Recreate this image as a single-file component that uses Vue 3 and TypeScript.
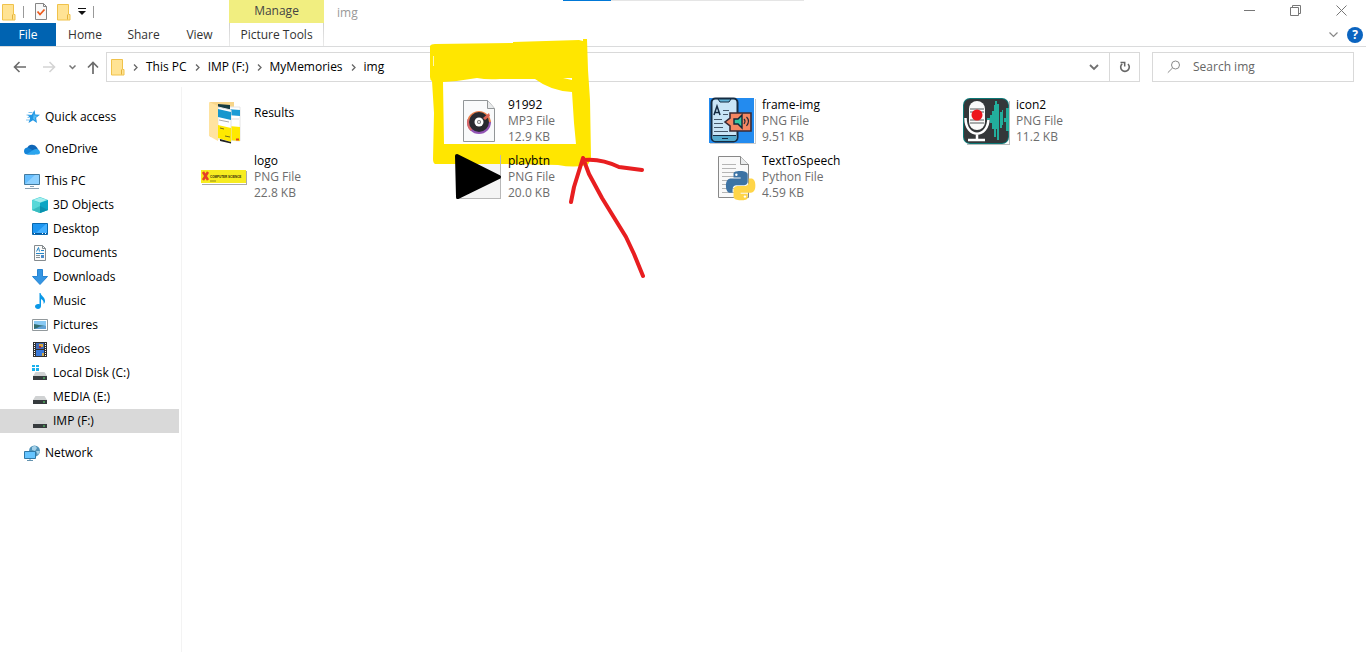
<script setup lang="ts">
import { ref } from 'vue'

interface Place {
  label: string
  icon: string
  nested?: boolean
}

interface Entry {
  name: string
  icon: string
  kind?: string
  size?: string
}

const groups: Place[][] = [
  [{ label: 'Quick access', icon: 'star' }],
  [{ label: 'OneDrive', icon: 'cloud' }],
  [
    { label: 'This PC', icon: 'pc' },
    { label: '3D Objects', icon: 'cube', nested: true },
    { label: 'Desktop', icon: 'desktop', nested: true },
    { label: 'Documents', icon: 'document', nested: true },
    { label: 'Downloads', icon: 'download', nested: true },
    { label: 'Music', icon: 'music', nested: true },
    { label: 'Pictures', icon: 'picture', nested: true },
    { label: 'Videos', icon: 'video', nested: true },
    { label: 'Local Disk (C:)', icon: 'system-drive', nested: true },
    { label: 'MEDIA (E:)', icon: 'drive', nested: true },
    { label: 'IMP (F:)', icon: 'drive', nested: true },
  ],
  [{ label: 'Network', icon: 'network' }],
]

const entries: Entry[] = [
  { name: 'Results', icon: 'results' },
  { name: '91992', icon: 'mp3', kind: 'MP3 File', size: '12.9 KB' },
  { name: 'frame-img', icon: 'frame', kind: 'PNG File', size: '9.51 KB' },
  { name: 'icon2', icon: 'mic', kind: 'PNG File', size: '11.2 KB' },
  { name: 'logo', icon: 'logo', kind: 'PNG File', size: '22.8 KB' },
  { name: 'playbtn', icon: 'play', kind: 'PNG File', size: '20.0 KB' },
  { name: 'TextToSpeech', icon: 'python', kind: 'Python File', size: '4.59 KB' },
]

const snake =
  'M14.250.180l.9.2.73.26.59.3.45.32.34.34.25.34.16.33.1.3.04.26.02.2-.01.13V8.500l-.05.63-.13.55-.21.46-.26.38-.3.31-.33.25-.35.19-.35.14-.33.1-.3.07-.26.04-.21.02H8.770l-.69.05-.59.14-.5.22-.41.27-.33.32-.27.35-.2.36-.15.37-.1.35-.07.32-.04.27-.02.21v3.060H3.170l-.21-.03-.28-.07-.32-.12-.35-.18-.36-.26-.36-.36-.35-.46-.32-.59-.28-.73-.21-.88-.14-1.050-.05-1.230.06-1.220.16-1.040.24-.87.32-.71.36-.57.4-.44.42-.33.42-.24.4-.16.36-.1.32-.05.24-.01h.16l.06.01h8.160v-.83H6.180l-.01-2.750-.02-.37.05-.34.11-.31.17-.28.25-.26.31-.23.38-.2.44-.18.51-.15.58-.12.64-.1.71-.06.77-.04.84-.02 1.270.05z'

const crumbs = ['This PC', 'IMP (F:)', 'MyMemories', 'img']
const selected = ref('IMP (F:)')
const query = ref('')
</script>

<template>
  <div class="window">
    <header class="titlebar">
      <div class="quickbar">
        <svg class="folder" width="14" height="18" viewBox="0 0 14 18"><path d="M.5 1.500h11v10h1.500v5.500H.5z" fill="#ffe394" stroke="#f0c24b" /><path d="M10.500 11.500v5" stroke="#e3b23c" /></svg>
        <span class="rule"></span>
        <button class="tool check" aria-label="Properties">
          <svg width="12" height="17" viewBox="0 0 12 17"><path d="M.5.5h8l3 3v13H.5z" fill="#f8f8f8" stroke="#858585" /><path d="M8.500.5v3h3" fill="none" stroke="#858585" /><path d="M2.500 8.500l2.500 3 4.500-5" fill="none" stroke="#ed5a1c" stroke-width="1.800" /></svg>
        </button>
        <button class="tool" aria-label="New folder">
          <svg width="14" height="18" viewBox="0 0 14 18"><path d="M.5 1.500h11v10h1.500v5.500H.5z" fill="#ffe394" stroke="#f0c24b" /><path d="M10.500 11.500v5" stroke="#e3b23c" /></svg>
        </button>
        <button class="tool more" aria-label="Customize toolbar">
          <svg width="8" height="7" viewBox="0 0 8 7"><path d="M0 .5h8" stroke="#111" /><path d="M0 3h8L4 7z" fill="#111" /></svg>
        </button>
        <span class="rule"></span>
      </div>
      <div class="manage">Manage</div>
      <h1 class="title">img</h1>
      <div class="controls">
        <button aria-label="Minimize"><svg width="11" height="11"><path d="M0 5.500h11" stroke="#777" /></svg></button>
        <button aria-label="Restore"><svg width="11" height="11" fill="none" stroke="#777"><path d="M.5 2.500h8v8h-8zM2.500 2.500v-2h8v8h-2" /></svg></button>
        <button aria-label="Close"><svg width="11" height="11"><path d="M.5.5l10 10M10.500.5l-10 10" stroke="#777" /></svg></button>
      </div>
    </header>

    <nav class="ribbon" aria-label="Ribbon">
      <div class="tabs">
        <button class="file">File</button>
        <button>Home</button>
        <button>Share</button>
        <button>View</button>
      </div>
      <button class="tools-tab">Picture Tools</button>
      <div class="ribbon-end">
        <button class="expand" aria-label="Expand ribbon"><svg width="9" height="6"><path d="M.5.5l4 4 4-4" fill="none" stroke="#888" stroke-width="1.200" /></svg></button>
        <button class="help" aria-label="Help">?</button>
      </div>
    </nav>

    <div class="navbar">
      <div class="history">
        <button class="back" aria-label="Back"><svg width="13" height="12"><path d="M13 6H1.500M6.500 1l-5 5 5 5" fill="none" stroke="#6b6b6b" stroke-width="1.600" /></svg></button>
        <button class="forward" aria-label="Forward"><svg width="13" height="12"><path d="M0 6h11.500M6.500 1l5 5-5 5" fill="none" stroke="#d4d4d4" stroke-width="1.600" /></svg></button>
        <button class="recent" aria-label="Recent locations"><svg width="7" height="5"><path d="M.5.5l3 3 3-3" fill="none" stroke="#777" stroke-width="1.500" /></svg></button>
        <button class="up" aria-label="Up"><svg width="12" height="13"><path d="M6 13V1.500M1 6.500l5-5 5 5" fill="none" stroke="#6b6b6b" stroke-width="1.700" /></svg></button>
      </div>
      <div class="address">
        <svg class="place" width="14" height="18" viewBox="0 0 14 18"><path d="M.5 1.500h11v10h1.500v5.500H.5z" fill="#ffe394" stroke="#f0c24b" /><path d="M10.500 11.500v5" stroke="#e3b23c" /></svg>
        <template v-for="crumb in crumbs" :key="crumb">
          <svg class="chevron" width="5" height="7"><path d="M1 .5l3 3-3 3" fill="none" stroke="#666" stroke-width="1.300" /></svg>
          <a class="crumb" href="#">{{ crumb }}</a>
        </template>
        <button class="previous" aria-label="Previous locations"><svg width="10" height="7"><path d="M1 1l4 4 4-4" fill="none" stroke="#707070" stroke-width="1.800" /></svg></button>
        <button class="refresh" aria-label="Refresh"><svg width="12" height="12"><path d="M3.200 2.800A4.300 4.300 0 1 0 9 3" fill="none" stroke="#666" stroke-width="1.600" /><path d="M1.500 1.500h4.200v4" fill="none" stroke="#666" stroke-width="1.500" /></svg></button>
      </div>
      <label class="search">
        <svg width="14" height="14"><circle cx="8.500" cy="5" r="4" fill="none" stroke="#8a8a8a" /><path d="M5.500 8L.8 12.700" stroke="#8a8a8a" /></svg>
        <input v-model="query" type="text" placeholder="Search img" aria-label="Search img" />
      </label>
    </div>

    <div class="body">
      <nav class="sidebar" aria-label="Places">
        <ul v-for="(group, index) in groups" :key="index">
          <li v-for="place in group" :key="place.label">
            <a
              href="#"
              :class="{ nested: place.nested, selected: place.label === selected }"
              @click.prevent="selected = place.label"
            >
              <svg width="16" height="16" viewBox="0 0 16 16" aria-hidden="true">
                <g v-if="place.icon === 'star'">
                  <path d="M10.500 1l.8 4.500 4.700.3-3.900 3 .9 5.200-4-2.800L4.500 14l1.600-4.900-2.600-3 4.300-.4z" fill="#2196e3" />
                  <path d="M10 3.500l.5 3 3.200.2-2.700 2 .5 3-2.500-2z" fill="#55bdf5" />
                  <path d="M4.500 3.500h4M2.500 6h3M3.500 8.500h2M2 11h3" stroke="#7fc2ee" />
                </g>
                <g v-else-if="place.icon === 'cloud'">
                  <path d="M3 7.500A5.500 5.500 0 0 1 13 6.500L15 10l-8 1z" fill="#0f66b7" />
                  <path d="M0 10a3.400 3.400 0 0 1 5-3l7 4.500-1 2H3.500A3.500 3.500 0 0 1 0 10z" fill="#1585d8" />
                  <path d="M3 13l7-4.500a4 4 0 0 1 6 2.500 2.500 2.500 0 0 1-2.500 2.500H4z" fill="#2ba5ee" />
                </g>
                <g v-else-if="place.icon === 'pc'">
                  <path d="M.5 1.500h15v10H.5z" fill="#65beff" stroke="#457b9f" />
                  <path d="M1 11L11 2h4v9z" fill="#8ed1ff" />
                  <path d="M6 13.500h4M1 15.500h14" stroke="#8aa0b1" />
                </g>
                <g v-else-if="place.icon === 'cube'">
                  <path d="M0 3l8-3 8 3v10l-8 3-8-3z" fill="#40cdd2" />
                  <path d="M0 3l8 3v10l-8-3z" fill="#58d8d8" />
                  <path d="M8 6l8-3v10l-8 3z" fill="#0aa5c4" />
                  <path d="M1 3l7-2.500L15 3 8 5.500z" fill="#a4eeee" />
                  <path d="M0 13l8-4v7z" fill="#18a0a8" fill-opacity=".5" />
                  <path d="M8 9l8 4-8 3z" fill="#087e99" fill-opacity=".5" />
                </g>
                <g v-else-if="place.icon === 'desktop'">
                  <path d="M.5 2.500h15v11H.5z" fill="#1e96f1" stroke="#0868af" />
                  <path d="M4 12L14 3h1v9z" fill="#43b0ff" />
                  <path d="M1 12.500h14" stroke="#07589b" />
                  <path d="M2 12.500h1M10 12.500h1M13 12.500h1" stroke="#fff" />
                </g>
                <g v-else-if="place.icon === 'document'">
                  <path d="M2.500.5h8l3 3v12h-11z" fill="#fafafa" stroke="#858b8e" />
                  <path d="M10.500.5v3h3" fill="none" stroke="#858b8e" />
                  <path d="M4.500 6.500l2-4 1 4M9 5.500h3M4 8.500h8" fill="none" stroke="#2585c5" />
                  <path d="M4 10.500h4M4 12.500h4" stroke="#859197" />
                  <path d="M9 10h3v3H9z" fill="#4d8cc8" />
                </g>
                <g v-else-if="place.icon === 'download'">
                  <path d="M5.500.5h5v7h5L8 15.500.5 7.500h5z" fill="#3495e3" stroke="#2684d3" />
                </g>
                <g v-else-if="place.icon === 'music'">
                  <path d="M7.500 0h1c.5 3 5 4.500 4.500 8.500-.3 1.500-1 2-1.500 2.500.5-2.500-.5-4-2.500-5v7c0 4-6 3.500-6 .5 0-2.200 2.500-3 4.500-2.300z" fill="#0a98e7" />
                </g>
                <g v-else-if="place.icon === 'picture'">
                  <path d="M.5 2.500h15v11H.5z" fill="#fff" stroke="#92999c" />
                  <path d="M2 4h12v8H2z" fill="#89c9f3" />
                  <path d="M2 7l5 1 7 1v3H2z" fill="#326d70" />
                  <path d="M5 11c3-2 6-2 9-2v3H2z" fill="#62a2d5" />
                </g>
                <g v-else-if="place.icon === 'video'">
                  <path d="M1 1h14v15H1z" fill="#303030" />
                  <path d="M4 2h8v6H4z" fill="#406ab6" />
                  <path d="M4 9h8v6H4z" fill="#3a79d8" />
                  <path d="M7 3h4v3H7z" fill="#d7a63a" />
                  <path d="M7 5h2v2H7z" fill="#ad2d3b" />
                  <path d="M10 12h2v3h-2z" fill="#d5ab49" />
                  <path d="M2.500 2v13M13.500 2v13" stroke="#fff" stroke-dasharray="1 1" />
                </g>
                <g v-else-if="place.icon === 'network'">
                  <circle cx="10.500" cy="6" r="5.500" fill="#4f92b8" />
                  <path d="M8 2l3-1.500L13 3l-2 3-3-1zM12 6h4l-2 4z" fill="#a3d0e8" />
                  <path d="M.5 6.500h11v7H.5z" fill="#65c4ff" stroke="#2f78a7" />
                  <path d="M3 15.500h6M6 14v2" stroke="#6594b0" />
                </g>
                <g v-else>
                  <path v-if="place.icon === 'system-drive'" d="M0 0h3v2H0zM4 0h3v2H4zM0 3h3v3H0zM4 3h3v3H4z" fill="#19b1ed" />
                  <path d="M3.500 7h9l2.500 4H1z" fill="#d0d2d3" />
                  <path d="M1 11h14v4H1z" fill="#363b3e" />
                  <path d="M11 13h2" stroke="#59e36b" />
                </g>
              </svg>
              <span>{{ place.label }}</span>
            </a>
          </li>
        </ul>
      </nav>

      <main class="files">
        <a v-for="entry in entries" :key="entry.name" class="entry" href="#">
          <svg width="48" height="48" viewBox="0 0 48 48" aria-hidden="true">
            <g v-if="entry.icon === 'results'">
              <path d="M10 5h24v35H10z" fill="#f7d58a" />
              <path d="M27 10h13v34l-13-1z" fill="#fff" stroke="#e4e4e4" />
              <path d="M27 12l13 1v6l-13-1z" fill="#1b9bd5" />
              <path d="M31 22h8" stroke="#ddd" />
              <path d="M29 29l11 1v14l-11-1z" fill="#ffe900" />
              <path d="M36 42.500h3" stroke="#e33f26" stroke-width="2" />
              <path d="M18 7l12 1v6l-12-2z" fill="#173c42" />
              <path d="M18 10l13 3v33l-13-4z" fill="#fff" stroke="#e4e4e4" />
              <path d="M18 12l13 3v8l-13-3z" fill="#1697ce" />
              <path d="M19 23l10 2" stroke="#aaa" />
              <path d="M18 28l13 3v14l-13-4z" fill="#ffe900" />
              <path d="M20 31l4 1M25 39l5 1" stroke="#776f16" />
              <path d="M20 42l11 3v1.500L20 44z" fill="#222" />
              <path d="M9 5l9 4v35l-9-5z" fill="#ffe3a0" />
            </g>
            <g v-else-if="entry.icon === 'mp3'">
              <path d="M9.500 3.500h24l7 8v33h-31z" fill="#f9fafb" stroke="#929698" />
              <path d="M33.500 3.500v8h7" fill="#e9ebec" stroke="#929698" />
              <path d="M13 26a12 12 0 0 1 24 0z" fill="#eb7f4c" />
              <path d="M13 25a12 12 0 0 0 24 0z" fill="#9254b5" />
              <path d="M13.500 22a12 12 0 0 0 3 12L25 26z" fill="#d8696a" />
              <circle cx="25" cy="25" r="10" fill="#292a30" />
              <path d="M29 21l6-5 1 3-5 4z" fill="#dc6455" />
              <circle cx="25" cy="25" r="4.500" fill="#fff" />
              <circle cx="25" cy="25" r="2" fill="#77787b" />
              <circle cx="25" cy="25" r="1" fill="#fff" />
            </g>
            <g v-else-if="entry.icon === 'frame'">
              <path d="M2 46h45V2h1v45H2z" fill="#ccc" />
              <path d="M1 1h45v45H1z" fill="#238bef" />
              <rect x="3.500" y="1.500" width="26" height="43" rx="4" fill="#c9e5f6" stroke="#152c43" stroke-width="2" />
              <path d="M10 2h13l-2 3h-9z" fill="#62b4d7" stroke="#152c43" />
              <path d="M4.500 39h24v2q0 3-3 3h-18q-3 0-3-3z" fill="#55aacd" />
              <path d="M5 38.500h23M14 41.500h6" stroke="#152c43" />
              <path d="M6 18L9 9l3 9M7 15.500h4" fill="none" stroke="#152c43" stroke-width="1.500" />
              <path d="M15 13.500h6M15 17.500h5M6 22.500h8M6 26.500h9M6 30.500h9M6 34.500h14" stroke="#45586a" />
              <path d="M22 16h21v18H22v-5l-5-4 5-4z" fill="#f48762" stroke="#382b36" stroke-width="1.600" />
              <path d="M26 22h4l4-4v13l-4-4h-4z" fill="#35c4a2" stroke="#13263a" stroke-width="1.400" />
              <path d="M36 22q2 2 0 5M38.500 20q4 4 0 9" fill="none" stroke="#222936" stroke-width="1.200" />
            </g>
            <g v-else-if="entry.icon === 'mic'">
              <path d="M5 47h42V4h1v44H5z" fill="#bbb" />
              <rect x="1" y="1" width="46" height="46" rx="7" fill="#0c7775" />
              <rect x="2" y="2" width="44" height="44" rx="6" fill="#343739" />
              <rect x="7" y="4" width="16" height="29" rx="8" fill="#fafafa" />
              <path d="M8 12h14M8 15h14M8 23h14M8 26h14" stroke="#555a5b" stroke-width="1.200" />
              <path d="M3.500 21c0 21 23 21 23 0M15 36v7M6 43h17" fill="none" stroke="#fff" stroke-width="2.500" />
              <path d="M25 21h3v-3h2v8h-2v-3h-3zM30 14h2V8h1V4h2v3h2v36h-2V32h-1v8h-2v-8h-2zM38 15h2v-2h1v15h-1v3h-2zM42 21h2V11h3v23h-3v-9h-2z" fill="#22af9c" />
              <circle cx="15" cy="18" r="5.500" fill="#ed151b" />
            </g>
            <g v-else-if="entry.icon === 'logo'">
              <path d="M2 31h44V18h1v14H2z" fill="#aaa" />
              <path d="M1 17h45v13H1z" fill="#f7ec20" />
              <path d="M3 19l5 8M8 19l-5 8" stroke="#e64126" stroke-width="2.500" />
              <text x="10" y="25" class="logo-text">COMPUTER SCIENCE</text>
              <path d="M10 28h6" stroke="#948b17" />
            </g>
            <g v-else-if="entry.icon === 'play'">
              <path d="M2 11h45v34H2z" fill="#f4f4f4" />
              <path d="M2 45.500h45M46.500 2v43" fill="none" stroke="#b8b8b8" />
              <path d="M3 3l42 21L4 44z" fill="#000" stroke="#000" stroke-width="4" stroke-linejoin="round" />
            </g>
            <g v-else>
              <path d="M10.500 3.500h22l8 8v33h-30z" fill="#f9f9f9" stroke="#888" />
              <path d="M32.500 3.500v8h8" fill="#e9ebec" stroke="#888" />
              <path d="M14 11.500h14M14 15.500h14M14 19.500h14M14 23.500h14M14 27.500h14M14 31.500h14M14 35.500h14M14 39.500h14" stroke="#b5b5b5" />
              <g transform="translate(18 18) scale(1.220)">
                <path :d="snake" fill="#3d73a4" />
                <path :d="snake" fill="#ffd548" transform="rotate(180 12 12)" />
                <circle cx="8.500" cy="3" r="1" fill="#fff" />
                <circle cx="15.500" cy="21" r="1" fill="#fff" />
              </g>
            </g>
          </svg>
          <span class="details">
            <span class="name">{{ entry.name }}</span>
            <span v-if="entry.kind">{{ entry.kind }}</span>
            <span v-if="entry.size">{{ entry.size }}</span>
          </span>
        </a>
      </main>
    </div>

    <div class="progress"><span></span></div>

    <svg class="marker" width="170" height="135" viewBox="425 35 170 135" aria-hidden="true">
      <path fill="#ffe600" fill-rule="evenodd" d="M430 46q1-2 5-2l78-1v-1l66-2 4 1v-2h4l1 31 2 30 1 57q-1 6-4 8-13 3-29 0l-43-1h-80q-2-1-2-5l1-46-2-32q-2-1-2-4zM443 82q17-1 34-4 10 2 23 1h35q16 12 37 13l2 31 2 21H444zM563 78l9 2v-2z" />
      <path d="M433.500 56v10" stroke="#fff7b0" />
    </svg>
    <svg class="arrow" width="90" height="130" viewBox="565 150 90 130" aria-hidden="true">
      <path d="M571 202l3-15 9-29 6 16 13 24 24 39 8 17 9 22M583 160q18-2 36 7l23 3" fill="none" stroke="#e81e20" stroke-width="4" stroke-linecap="round" stroke-linejoin="round" />
    </svg>
  </div>
</template>

<style>
body {
  background: #fff;
}
</style>

<style scoped>
.window {
  position: relative;
  display: flex;
  flex-direction: column;
  min-height: 100vh;
  overflow: hidden;
  background: #fff;
  color: #000;
  font-family: "Open Sans", "Noto Sans", sans-serif;
  font-size: 12px;
  line-height: 16px;
}

svg {
  display: block;
  flex: none;
}

button {
  display: flex;
  align-items: center;
  justify-content: center;
  padding: 0;
  border: 0;
  background: none;
  color: inherit;
  font: inherit;
}

a {
  color: inherit;
  text-decoration: none;
}

.titlebar {
  display: flex;
  height: 23px;
}

.quickbar {
  display: flex;
  align-items: center;
  box-sizing: border-box;
  width: 229px;
  padding-left: 2px;
}

.rule {
  width: 1px;
  height: 12px;
  margin: 0 8px 0 7px;
  background: #999;
}

.check {
  margin: 0 10px 0 3px;
}

.more {
  margin-left: 7px;
}

.manage {
  width: 95px;
  padding-top: 3px;
  box-sizing: border-box;
  background: #f1ee80;
  text-align: center;
  color: #444;
}

.title {
  margin: 5px 0 0 13px;
  color: #999;
  font-size: 12px;
  font-weight: 400;
}

.controls {
  display: flex;
  margin-left: auto;
  padding-right: 2px;
}

.controls button {
  width: 46px;
  height: 21px;
}

.ribbon {
  display: flex;
  height: 23px;
  border-bottom: 1px solid #dadbdc;
  color: #333;
}

.tabs {
  display: grid;
  grid-template-columns: 56px 58px 59px 53px;
  width: 229px;
}

.tabs button,
.tools-tab {
  padding-top: 1px;
}

.tabs .file {
  background: #0063b1;
  color: #fff;
}

.tools-tab {
  width: 95px;
  border: solid;
  border-width: 0 1px;
  border-image: linear-gradient(#cfcfcf, #ececec) 1;
}

.ribbon-end {
  display: flex;
  align-items: center;
  gap: 9px;
  margin-left: auto;
  padding-right: 3px;
}

.help {
  width: 16px;
  height: 16px;
  border-radius: 50%;
  background: #0b64c0;
  color: #fff;
  font-weight: 700;
}

.navbar {
  display: flex;
  align-items: center;
  height: 40px;
  padding-right: 12px;
}

.history {
  display: flex;
  align-items: center;
  width: 106px;
}

.back {
  margin-left: 13px;
}

.forward {
  margin-left: 17px;
}

.recent {
  margin-left: 13px;
}

.up {
  margin-left: 11px;
}

.address,
.search {
  display: flex;
  align-items: center;
  box-sizing: border-box;
  height: 30px;
  border: 1px solid #d9d9d9;
}

.address {
  flex: 1;
  padding-left: 4px;
}

.chevron {
  margin: 0 8px;
}

.previous {
  width: 30px;
  height: 28px;
  margin-left: auto;
}

.refresh {
  width: 30px;
  height: 28px;
  border-left: 1px solid #d9d9d9;
}

.search {
  gap: 12px;
  width: 202px;
  margin-left: 12px;
  padding-left: 14px;
}

.search input {
  width: 100%;
  padding: 0;
  border: 0;
  outline: 0;
  background: none;
  font: inherit;
}

.search input::placeholder {
  color: #666;
  opacity: 1;
}

.body {
  display: flex;
  flex: 1;
}

.sidebar {
  display: flex;
  flex-direction: column;
  gap: 8px;
  box-sizing: border-box;
  width: 182px;
  padding: 18px 2px 0 0;
  border-right: 1px solid #f3f3f3;
}

.sidebar ul {
  margin: 0;
  padding: 0;
  list-style: none;
}

.sidebar a {
  display: flex;
  align-items: center;
  gap: 5px;
  height: 24px;
  padding-left: 24px;
}

.sidebar .nested {
  padding-left: 32px;
}

.sidebar .selected {
  background: #d9d9d9;
}

.files {
  position: relative;
  z-index: 2;
  display: grid;
  flex: 1;
  grid-template-columns: repeat(auto-fill, 254px);
  grid-auto-rows: 56px;
  align-content: start;
  padding: 6px 0 0 18px;
}

.entry {
  display: flex;
  align-items: center;
  gap: 6px;
}

.details {
  display: flex;
  flex-direction: column;
  color: #6d6d6d;
}

.name {
  color: #000;
}

.name:only-child {
  margin-bottom: 16px;
}

.logo-text {
  fill: #29270c;
  font-family: "Liberation Sans Narrow", "Liberation Sans", sans-serif;
  font-size: 3px;
  font-weight: 700;
}

.progress {
  position: absolute;
  top: 0;
  left: 563px;
  width: 241px;
  height: 1px;
  background: #e5e5e5;
}

.progress span {
  display: block;
  width: 20%;
  height: 1px;
  background: #0078d7;
}

.marker {
  position: absolute;
  z-index: 1;
  top: 35px;
  left: 425px;
  pointer-events: none;
}

.arrow {
  position: absolute;
  z-index: 3;
  top: 150px;
  left: 565px;
  pointer-events: none;
}
</style>
